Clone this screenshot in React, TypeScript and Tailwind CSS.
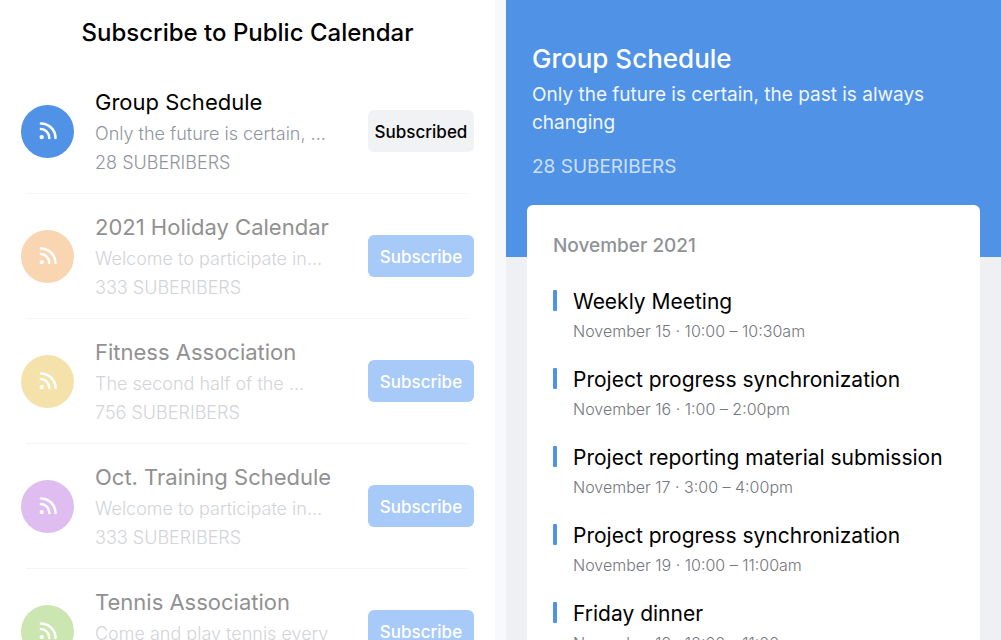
import { useState } from "react";

type CalendarType = {
  id: number
  title: string
  description: string
  count: number
  color: string
  subscribed: boolean
}

const CALENDARS: CalendarType[] = [
  { id: 1, title: 'Group Schedule', description: 'Only the future is certain, ...', count: 28, color: 'bg-[#4f92e6]', subscribed: true },
  { id: 2, title: '2021 Holiday Calendar', description: 'Welcome to participate in...', count: 333, color: 'bg-[#f9d5b2]', subscribed: false },
  { id: 3, title: 'Fitness Association', description: 'The second half of the ...', count: 756, color: 'bg-[#f5e2ab]', subscribed: false },
  { id: 4, title: 'Oct. Training Schedule', description: 'Welcome to participate in...', count: 333, color: 'bg-[#dfbdf0]', subscribed: false },
  { id: 5, title: 'Tennis Association', description: 'Come and play tennis every', count: 128, color: 'bg-[#cbe6b0]', subscribed: false },
]

const EVENTS = [
  { title: 'Weekly Meeting', time: 'November 15 · 10:00 – 10:30am' },
  { title: 'Project progress synchronization', time: 'November 16 · 1:00 – 2:00pm' },
  { title: 'Project reporting material submission', time: 'November 17 · 3:00 – 4:00pm' },
  { title: 'Project progress synchronization', time: 'November 19 · 10:00 – 11:00am' },
  { title: 'Friday dinner', time: 'November 19 · 10:00 – 11:00am' },
]

function FeedIcon() {
  return (
    <svg width="18" height="18" viewBox="0 0 18 18" fill="none" stroke="white" strokeWidth="2.5" strokeLinecap="round" aria-hidden="true">
      <path d="M1.9 1.5C10 1.5 16.5 8 16.5 16" />
      <path d="M1.9 7C6.4 7 10.3 10.9 10.3 16" />
      <circle cx="2.7" cy="15.1" r="2.2" fill="white" stroke="none" />
    </svg>
  )
}

type RowProps = {
  calendar: CalendarType
  onToggle: (id: number) => void
}

function CalendarRow({ calendar, onToggle }: RowProps) {
  const { id, title, description, count, color, subscribed } = calendar

  return (
    <li className="group">
      <div className="flex items-center h-[124px] px-[21px]">
        <div className={`flex shrink-0 items-center justify-center size-[53px] rounded-full ${color}`}>
          <FeedIcon />
        </div>
        <div className="flex-1 min-w-0 ml-[21px]">
          <h2 className={`pb-px text-[22px] leading-[32px] font-normal whitespace-nowrap ${subscribed ? 'text-black' : 'text-[#919191]'}`}>{title}</h2>
          <p className={`text-[18px] leading-[29px] whitespace-nowrap font-light ${subscribed ? 'text-[#8f959e]' : 'text-[#d2d4d7]'}`}>{description}</p>
          <p className={`text-[18px] leading-[29px] whitespace-nowrap font-light ${subscribed ? 'text-[#8f959e]' : 'text-[#d2d4d7]'}`}>{count} SUBERIBERS</p>
        </div>
        <button
          type="button"
          onClick={() => onToggle(id)}
          className={`shrink-0 w-[106px] h-[42px] pt-[3px] rounded-md text-[17px] font-medium ${subscribed ? 'bg-[#f1f2f4] text-black' : 'bg-[#a8caf9] text-white'}`}
        >
          {subscribed ? 'Subscribed' : 'Subscribe'}
        </button>
      </div>
      <div className="h-px ml-[26px] mr-[28px] bg-[#f5f5f6] group-last:hidden" />
    </li>
  )
}

function App() {
  const [calendars, setCalendars] = useState(CALENDARS)

  const handleToggle = (id: number) => {
    setCalendars((prev) => prev.map((item) => item.id === id ? { ...item, subscribed: !item.subscribed } : item))
  }

  return (
    <div className="flex gap-[11px] h-screen overflow-hidden bg-[#f8f9fb] font-['Inter','Liberation_Sans',sans-serif]">

      <section className="flex-1 min-w-0 bg-white overflow-hidden">
        <h1 className="pt-[17px] pb-5 text-center text-[24px] leading-[32px] font-medium text-black">Subscribe to Public Calendar</h1>
        <ul>
          {calendars.map((item) => (
            <CalendarRow key={item.id} calendar={item} onToggle={handleToggle} />
          ))}
        </ul>
      </section>

      <section className="flex-1 min-w-0 bg-[#eff0f3] overflow-hidden">
        <header className="bg-[#4f92e6] pt-[42px] pb-[76px] px-[26px] text-white">
          <h1 className="text-[26px] leading-[34px] font-medium">Group Schedule</h1>
          <p className="mt-[5px] text-[19px] leading-[28px] text-[#f1f6fd]">Only the future is certain, the past is always changing</p>
          <p className="mt-4 text-[19px] leading-[28px] text-[#cde0f9]">28 SUBERIBERS</p>
        </header>
        <div className="-mt-[52px] mx-[21px] px-[26px] pt-[27px] pb-6 min-h-screen bg-white rounded-md">
          <h2 className="text-[19px] leading-[28px] font-medium text-[#8f9297]">November 2021</h2>
          <ul className="mt-[27px]">
            {EVENTS.map((event, index) => (
              <li key={index} className="flex h-[78px]">
                <span className="shrink-0 w-1 h-[21px] mt-[3px] rounded-[1px] bg-[#4f92e6]" />
                <div className="ml-4 min-w-0">
                  <h3 className="text-[21px] leading-[29px] font-normal text-black whitespace-nowrap">{event.title}</h3>
                  <p className="mt-[3px] text-[16px] leading-[24px] font-light text-[#74777c] whitespace-nowrap">{event.time}</p>
                </div>
              </li>
            ))}
          </ul>
        </div>
      </section>

    </div>
  )
}

export default App;
